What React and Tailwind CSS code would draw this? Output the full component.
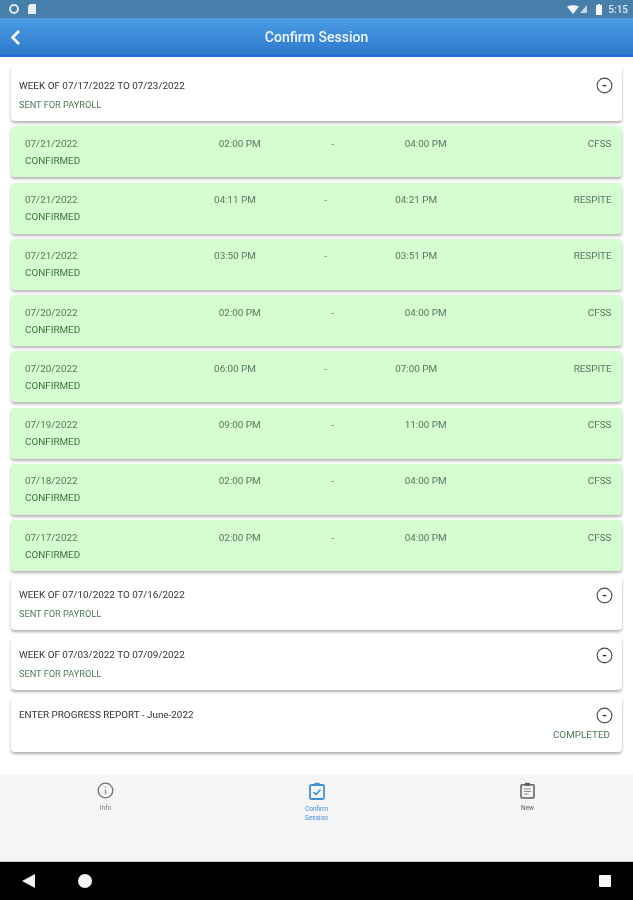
const sessions = [
  { date: "07/21/2022", start: "02:00 PM", end: "04:00 PM", type: "CFSS" },
  { date: "07/21/2022", start: "04:11 PM", end: "04:21 PM", type: "RESPITE" },
  { date: "07/21/2022", start: "03:50 PM", end: "03:51 PM", type: "RESPITE" },
  { date: "07/20/2022", start: "02:00 PM", end: "04:00 PM", type: "CFSS" },
  { date: "07/20/2022", start: "06:00 PM", end: "07:00 PM", type: "RESPITE" },
  { date: "07/19/2022", start: "09:00 PM", end: "11:00 PM", type: "CFSS" },
  { date: "07/18/2022", start: "02:00 PM", end: "04:00 PM", type: "CFSS" },
  { date: "07/17/2022", start: "02:00 PM", end: "04:00 PM", type: "CFSS" },
];

function App() {
  return (
    <div className="flex flex-col w-[633px] h-[900px] bg-white overflow-hidden blur-[0.4px] font-['Roboto',sans-serif]">
      <StatusBar />

      {/* Header */}
      <div className="relative flex items-center justify-center h-[39px] shrink-0 bg-gradient-to-b from-[#4a9de2] to-[#2f78cd] border-b-2 border-[#1c6fd6]">
        <svg className="absolute left-[9px] top-[11px]" width="12" height="17" viewBox="0 0 12 17" fill="none">
          <path d="M10 2L3.5 8.5L10 15" stroke="white" strokeWidth="2.6" />
        </svg>
        <span className="text-sm font-medium text-[#eef6ff]">Confirm Session</span>
      </div>

      {/* List */}
      <div className="flex-1 min-h-0 overflow-hidden px-[11px] pt-[9px] flex flex-col gap-[5.25px]">
        <WeekCard title="WEEK OF 07/17/2022 TO 07/23/2022" status="SENT FOR PAYROLL" className="h-[55px]" pad="pt-[13.5px]" iconTop="top-[10.5px]" />
        {sessions.map((s, i) => (
          <SessionCard key={i} {...s} />
        ))}
        <WeekCard title="WEEK OF 07/10/2022 TO 07/16/2022" status="SENT FOR PAYROLL" className="h-[53px] mt-[1px]" pad="pt-[11.5px]" iconTop="top-[9.5px]" />
        <WeekCard title="WEEK OF 07/03/2022 TO 07/09/2022" status="SENT FOR PAYROLL" className="h-[53px] mt-[1.75px]" pad="pt-[11.5px]" iconTop="top-[9.5px]" />
        <ReportCard />
        <div className="h-[40px] shrink-0 mt-[1.75px] bg-white rounded-t shadow-[0_0_2px_rgba(0,0,0,0.07)]" />
      </div>

      {/* Bottom tabs */}
      <div className="grid grid-cols-3 h-[87px] shrink-0 bg-[#f5f5f5] border-b border-[#cfcfcf] pt-[7px]">
        <Tab icon={<InfoIcon />} color="text-[#777777]" label="Info" />
        <Tab icon={<CheckBoardIcon />} color="text-[#3f8fd8]" label={"Confirm\nSession"} />
        <Tab icon={<NotesBoardIcon />} color="text-[#5f5f5f]" label="New" />
      </div>

      <NavBar />
    </div>
  );
}

/* ----------------------------- UI COMPONENTS ----------------------------- */

function StatusBar() {
  return (
    <div className="flex items-center justify-between h-[18px] shrink-0 bg-[#4680aa] pl-[9px] pr-[5px]">
      <div className="flex items-center gap-[9px]">
        <span className="w-[10px] h-[10px] rounded-full border-[2.5px] border-[#dfe9f0]" />
        <svg width="8" height="10" viewBox="0 0 8 10">
          <path d="M2 0H8V10H0V2Z" fill="#e6eef4" />
        </svg>
      </div>
      <div className="flex items-center">
        <svg width="12" height="9" viewBox="0 0 12 9">
          <path d="M0 1.5Q6 -1 12 1.5L6 9Z" fill="#f2f6f9" />
        </svg>
        <svg className="ml-[1px]" width="7" height="8" viewBox="0 0 7 8">
          <path d="M7 0V8H0Z" fill="#c4d5e1" />
        </svg>
        <svg className="ml-[9px]" width="6" height="11" viewBox="0 0 6 11">
          <path d="M2 0H4V1H6V11H0V1H2Z" fill="#f2f6f9" />
        </svg>
        <span className="ml-[6px] text-[10px] font-medium text-[#dde8f0]">5:15</span>
      </div>
    </div>
  );
}

function CollapseIcon() {
  return (
    <svg width="17" height="17" viewBox="0 0 17 17" fill="none">
      <circle cx="8.5" cy="8.5" r="7.4" stroke="#4a4a4a" strokeWidth="1.1" />
      <path d="M6.7 8.6H10.3" stroke="#333333" strokeWidth="1.4" />
    </svg>
  );
}

function InfoIcon() {
  return (
    <svg width="17" height="17" viewBox="0 0 17 17" fill="none">
      <circle cx="8.5" cy="8.5" r="7.3" stroke="#707070" strokeWidth="1.3" />
      <path d="M8.5 4.6V5.8M8.5 7.2V12.2" stroke="#9a9a9a" strokeWidth="1.4" />
    </svg>
  );
}

function CheckBoardIcon() {
  return (
    <svg width="16" height="18" viewBox="0 0 16 18" fill="none">
      <rect x="1" y="3" width="14" height="14" rx="1.5" stroke="#3f8fd8" strokeWidth="1.8" />
      <path d="M5.5 0.8H10.5V3.8H5.5Z" fill="#3f8fd8" />
      <path d="M4.5 10L7 12.5L11.5 7.5" stroke="#3f8fd8" strokeWidth="1.6" />
    </svg>
  );
}

function NotesBoardIcon() {
  return (
    <svg width="15" height="17" viewBox="0 0 15 17" fill="none">
      <rect x="1" y="2.8" width="13" height="13.2" rx="1" stroke="#5f5f5f" strokeWidth="1.5" />
      <path d="M5 0.8H10V3.8H5Z" fill="#5f5f5f" />
      <path d="M4 7H11M4 9.5H11M4 12H8.5" stroke="#8a8a8a" strokeWidth="1.1" />
    </svg>
  );
}

function WeekCard({ title, status, className, pad, iconTop }) {
  return (
    <div className={`relative shrink-0 bg-white rounded shadow-[0_2px_3px_rgba(0,0,0,0.32)] pl-[8px] ${className} ${pad}`}>
      <p className="text-[9.9px] leading-[12px] text-[#333333]">{title}</p>
      <p className="mt-[7.5px] text-[9.2px] leading-[11px] text-[#4c7a55]">{status}</p>
      <div className={`absolute right-[9px] ${iconTop}`}>
        <CollapseIcon />
      </div>
    </div>
  );
}

function ReportCard() {
  return (
    <div className="relative h-[55px] mt-[1.75px] shrink-0 bg-white rounded shadow-[0_2px_3px_rgba(0,0,0,0.32)] pl-[8px] pt-[11.5px]">
      <p className="text-[9.9px] leading-[12px] text-[#333333]">ENTER PROGRESS REPORT - June-2022</p>
      <div className="absolute right-[9px] top-[9.5px]">
        <CollapseIcon />
      </div>
      <p className="absolute right-[12px] top-[31.5px] text-[9.9px] leading-[12px] text-[#4c7a55]">COMPLETED</p>
    </div>
  );
}

function SessionCard({ date, start, end, type }) {
  return (
    <div className="h-[51px] shrink-0 bg-[#d4fdd0] rounded shadow-[0_2px_3px_rgba(0,0,0,0.3)] pl-[14px] pr-[10.5px] pt-[11.5px]">
      <div className="flex text-[9.9px] leading-[12px] text-[#5c7560]">
        <span>{date}</span>
        <span className="grow-2" />
        <span>{start}</span>
        <span className="grow" />
        <span>-</span>
        <span className="grow" />
        <span>{end}</span>
        <span className="grow-2" />
        <span>{type}</span>
      </div>
      <p className="mt-[5px] text-[9.9px] leading-[12px] text-[#3f7045]">CONFIRMED</p>
    </div>
  );
}

function Tab({ icon, color, label }) {
  return (
    <div className={`flex flex-col items-center ${color}`}>
      {icon}
      <span className="mt-[5px] text-[6.5px] leading-[9px] text-center whitespace-pre-line">{label}</span>
    </div>
  );
}

function NavBar() {
  return (
    <div className="relative flex items-center h-[38px] shrink-0 bg-black">
      <svg className="absolute left-[22px] top-[12px]" width="13" height="14" viewBox="0 0 13 14">
        <path d="M13 0V14L0 7Z" fill="#f2f2f2" />
      </svg>
      <span className="absolute left-[78px] top-[12px] w-[14px] h-[14px] rounded-full bg-[#f5f5f5]" />
      <span className="absolute left-[599px] top-[13px] w-[12px] h-[12px] rounded-[1px] bg-[#f5f5f5]" />
    </div>
  );
}

export default App;
